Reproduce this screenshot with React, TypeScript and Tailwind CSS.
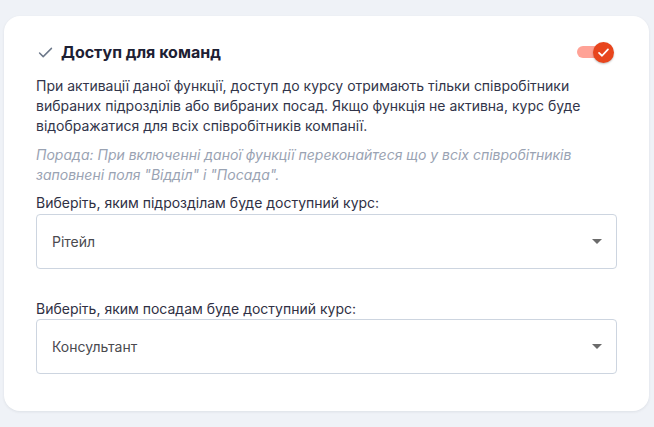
import React from 'react';

function CheckMark({ className }: { className?: string }) {
  return (
    <svg viewBox="0 0 16 12" className={className} fill="none">
      <path d="M1.5 6.5 L5.5 10.5 L14.5 1.5" stroke="currentColor" strokeWidth="1.6" strokeLinecap="round" strokeLinejoin="round" />
    </svg>
  );
}

function Toggle() {
  return (
    <div className="relative w-[37px] h-[21px] flex items-center mr-[3px]">
      <div className="w-[30px] h-[12px] rounded-full bg-[#ffa296]" />
      <div className="absolute right-0 top-0 w-[21px] h-[21px] rounded-full bg-[#e8451d] flex items-center justify-center shadow-[0_1px_2px_rgba(0,0,0,0.25)]">
        <svg viewBox="0 0 16 16" className="w-[13px] h-[13px]" fill="none">
          <path d="M2.5 8.5 L6.2 12 L13.5 4.2" stroke="white" strokeWidth="2.2" strokeLinecap="round" strokeLinejoin="round" />
        </svg>
      </div>
    </div>
  );
}

function Select({ value }: { value: string }) {
  return (
    <div className="h-[55px] w-full rounded-[4px] border border-[#cdd5e0] bg-white flex items-center justify-between pl-[15px] pr-[14px]">
      <span className="text-[14px] text-[#4a4a4f]">{value}</span>
      <span className="w-0 h-0 border-l-[5px] border-r-[5px] border-t-[5px] border-l-transparent border-r-transparent border-t-[#6b6b6b]" />
    </div>
  );
}

export default function App() {
  return (
    <div
      className="w-[654px] h-[427px] bg-[#eff2f7] pt-[16px] pl-[4px] pr-[5px]"
      style={{ fontFamily: 'Inter, "Noto Sans", sans-serif' }}
    >
      <div className="h-[395px] bg-white rounded-[16px] shadow-[0_1px_3px_rgba(15,23,42,0.08)] pt-[24px] pl-[32px] pr-[32px]">
        <div className="flex items-center justify-between h-[24px]">
          <div className="flex items-center gap-[8px] pl-[2px]">
            <CheckMark className="w-[15px] h-[11px] text-[#6b7789]" />
            <span className="text-[16px] leading-[24px] font-bold text-[#1d2033]">Доступ для команд</span>
          </div>
          <Toggle />
        </div>

        <p className="mt-[12px] text-[14px] leading-[20px] text-[#32354a]">
          При активації даної функції, доступ до курсу отримають тільки співробітники вибраних підрозділів або вибраних посад. Якщо функція не активна, курс буде відображатися для всіх співробітників компанії.
        </p>

        <p className="mt-[9px] text-[14px] leading-[20px] italic text-[#9aa3b3]">
          Порада: При включенні даної функції переконайтеся що у всіх співробітників заповнені поля "Відділ" і "Посада".
        </p>

        <div className="mt-[8px] text-[14px] leading-[20px] text-[#2f3044]">
          Виберіть, яким підрозділам буде доступний курс:
        </div>
        <div className="mt-[1px]">
          <Select value="Рітейл" />
        </div>

        <div className="mt-[30px] text-[14px] leading-[20px] text-[#2f3044]">
          Виберіть, яким посадам буде доступний курс:
        </div>
        <div>
          <Select value="Консультант" />
        </div>
      </div>
    </div>
  );
}
